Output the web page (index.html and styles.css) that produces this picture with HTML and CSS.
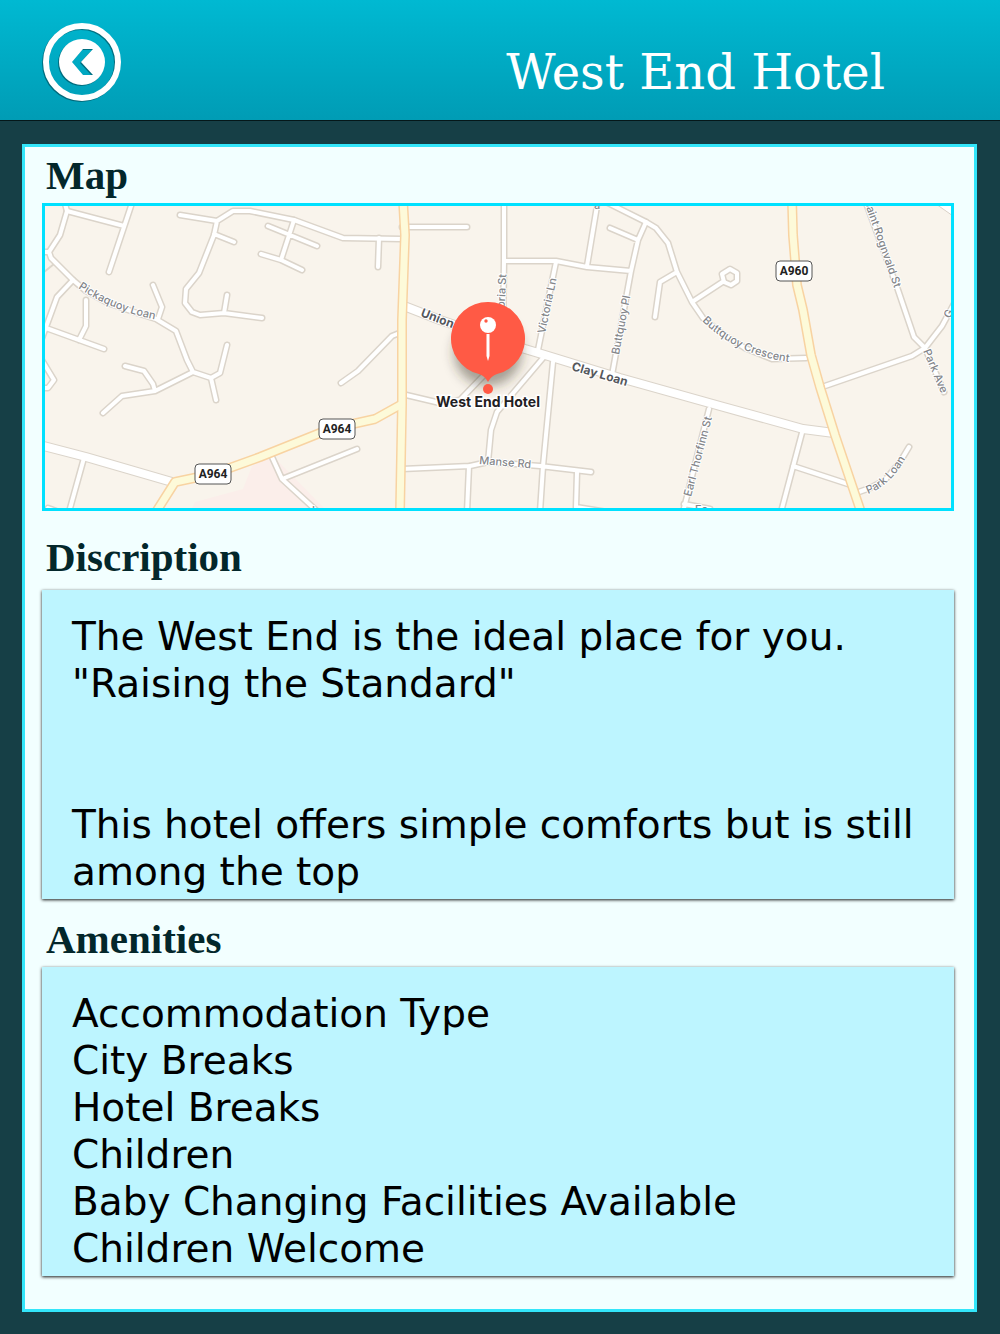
FILE: index.html
```html
<!DOCTYPE html>
<html lang="en">
<head>
<meta charset="utf-8">
<meta name="viewport" content="width=device-width, initial-scale=1">
<title>West End Hotel</title>
<link rel="stylesheet" href="styles.css">
</head>
<body>
<header class="topbar">
  <button class="back" type="button" aria-label="Back">
    <svg viewBox="0 0 80 80" aria-hidden="true">
      <circle class="ring" cx="40" cy="40" r="36"/>
      <path class="disc" fill-rule="evenodd" d="M40 17a23 23 0 1 1 0 46a23 23 0 1 1 0-46zM30 40L41 27H51L39 40L51 53H41z"/>
    </svg>
  </button>
  <h1 class="title">West End Hotel</h1>
</header>

<main class="panel">
  <section class="section section-map">
    <h2 class="heading">Map</h2>
    <div class="map">
      <svg class="map-art" viewBox="45 206 906 302" preserveAspectRatio="xMidYMid slice" role="img" aria-label="Map around the West End Hotel">
        <defs>
          <g id="lanes">
            <path d="M64 200L67 211L60 235L49 252H40M49 252L51 258L73 280L86 291L108 303L134 312L156 319L176 331L187 360L193 372L211 378L220 373L227 345M211 378L216 400M193 372L155 391L122 396L103 413M155 391L153 384L144 371L125 366"/>
            <path d="M67 211L124 226M133 200L109 272M73 280L57 297L42 338M46 328L104 349M86 300V326L79 340M40 357L54 380L48 388H40M153 285L162 307L158 319"/>
            <path d="M180 215L217 221L233 211H250L294 220L343 238L402 239M217 221L214 235L199 273L186 289L185 303L192 312L200 315L224 313L262 318M214 234L234 242M224 313L227 295"/>
            <path d="M268 226L317 246M261 254L281 260L302 270M294 220L281 260M379 238L378 267M402 227H467M402 332L392 336L358 371L341 383"/>
            <path d="M84 458L69 512M48 508L64 514M272 457L282 479L318 512M282 479L357 449"/>
            <path d="M402 394L440 403L460 400L486 373M402 469L470 466L488 462L540 466L591 472M469 466L467 512M543 358L497 412L491 430L488 462M553 362L543 466L540 512"/>
            <path d="M504 200V261L503 330M504 261H556L587 267L631 271M598 200L587 266M556 262L538 350M646 222L638 240L631 271L612 375M610 228L638 240M577 472L576 507L607 512"/>
            <path d="M602 200L646 222L656 228L668 243L677 272L692 302L703 318L724 335L745 348L772 359L806 358M677 272L660 282L655 317M692 302L724 281M730 269L737 273L737 281L731 285L724 282L722 274Z"/>
            <path d="M709 409L683 512M684 504L710 509M803 429L781 512M793 466L848 484M856 493L870 488L885 480L900 462L909 447M822 387L912 356L925 348L942 326L956 300M865 200L898 290L914 337L925 348L944 392"/>
          </g>
          <g id="streets">
            <path d="M40 445L86 457L172 482"/>
            <path d="M404 306L440 320L525 349L545 355L620 378L720 406L803 429L834 433"/>
          </g>
          <g id="mains">
            <path d="M403 200L405 235L402 320L402 404L400 512"/>
            <path d="M402 404L375 419L330 429L260 457L213 474L175 482L156 512"/>
            <path d="M792 200L793 235L797 285L803 310L811 355L820 387L835 435L861 512"/>
          </g>
          <path id="p-pick" d="M78 288Q112 311 157 320"/>
          <path id="p-union" d="M420 316L470 335"/>
          <path id="p-clay" d="M571 370L640 390"/>
          <path id="p-vic" d="M504 318L507 262"/>
          <path id="p-vln" d="M545 334L560 262"/>
          <path id="p-butt" d="M619 355L633 282"/>
          <path id="p-cres" d="M702 321Q741 359 800 363"/>
          <path id="p-rogn" d="M864 201L900 305"/>
          <path id="p-park" d="M923 351L946 405"/>
          <path id="p-loan" d="M868 494Q890 486 906 458"/>
          <path id="p-earl" d="M691 497L714 410"/>
          <path id="p-manse" d="M479 464L540 469"/>
          <path id="p-g" d="M950 319L962 295"/>
          <filter id="soft" x="-50%" y="-50%" width="200%" height="200%"><feGaussianBlur stdDeviation="6"/></filter>
        </defs>
        <rect class="land" x="40" y="200" width="920" height="320"/>
        <path class="pink" d="M190 512L195 502L243 489L252 466L272 455L328 512z"/>
        <path class="corner" d="M936 204L953 216V204z"/>
        <path class="track" d="M44 272L54 264"/>
        <use class="lane-edge" href="#lanes"/>
        <use class="street-edge" href="#streets"/>
        <use class="lane" href="#lanes"/>
        <use class="street" href="#streets"/>
        <use class="main-edge" href="#mains"/>
        <use class="main-road" href="#mains"/>

        <g class="label">
          <text><textPath href="#p-pick">Pickaquoy Loan</textPath></text>
          <text><textPath href="#p-vic">ctoria St</textPath></text>
          <text><textPath href="#p-vln">Victoria Ln</textPath></text>
          <text><textPath href="#p-butt">Buttquoy Pl</textPath></text>
          <text><textPath href="#p-cres">Buttquoy Crescent</textPath></text>
          <text><textPath href="#p-rogn">Saint Rognvald St</textPath></text>
          <text><textPath href="#p-park">Park Ave</textPath></text>
          <text><textPath href="#p-loan">Park Loan</textPath></text>
          <text><textPath href="#p-earl">Earl Thorfinn St</textPath></text>
          <text><textPath href="#p-manse">Manse Rd</textPath></text>
          <text><textPath href="#p-g">G</textPath></text>
          <text x="695" y="513">Ea</text>
          <text x="594" y="209">a</text>
          <text x="312" y="514">L</text>
        </g>
        <g class="label label-strong">
          <text><textPath href="#p-union">Union</textPath></text>
          <text><textPath href="#p-clay">Clay Loan</textPath></text>
        </g>

        <g class="sign">
          <rect x="319" y="419" width="36" height="20" rx="4"/><text x="337" y="433">A964</text>
          <rect x="195" y="464" width="36" height="20" rx="4"/><text x="213" y="478">A964</text>
          <rect x="776" y="261" width="36" height="20" rx="4"/><text x="794" y="275">A960</text>
        </g>

        <circle class="pin-shadow" cx="488" cy="352" r="34" filter="url(#soft)"/>
        <path class="pin" d="M488 302a36.500 36.500 0 0 1 9 72q-6 2-9 8q-3-6-9-8a36.500 36.500 0 0 1 9-72z"/>
        <circle class="pin" cx="488" cy="389" r="5"/>
        <path class="pin-glyph" d="M486.500 334h3v22l-1.500 5l-1.500-5z"/>
        <circle class="pin-glyph" cx="488" cy="325" r="8"/>
        <circle class="pin" cx="486" cy="321" r="1.700"/>
        <text class="place" x="488" y="407">West End Hotel</text>
      </svg>
    </div>
  </section>

  <section class="section section-text">
    <h2 class="heading">Discription</h2>
    <div class="card">
      <p>The West End is the ideal place for you.<br>"Raising the Standard"</p>
      <p class="after-break">This hotel offers simple comforts but is still among the top</p>
    </div>
  </section>

  <section class="section">
    <h2 class="heading">Amenities</h2>
    <ul class="card">
      <li>Accommodation Type</li>
      <li>City Breaks</li>
      <li>Hotel Breaks</li>
      <li>Children</li>
      <li>Baby Changing Facilities Available</li>
      <li>Children Welcome</li>
    </ul>
  </section>
</main>
</body>
</html>
```
FILE: styles.css
```css
* { box-sizing: border-box; }

body {
  margin: 0;
  background: #163f46;
  color: #000;
  font-family: "DejaVu Sans", Verdana, sans-serif;
}

h1, h2, p, ul { margin: 0; padding: 0; }

.topbar {
  display: flex;
  align-items: center;
  justify-content: space-between;
  height: 121px;
  padding: 4px 115px 0 42px;
  border-bottom: 1px solid #041719;
  background: linear-gradient(#00b9d2, #009cb5);
}

.back {
  width: 80px;
  height: 80px;
  padding: 0;
  border: 0;
  background: none;
  cursor: pointer;
}

.back svg {
  display: block;
  width: 80px;
  height: 80px;
  filter: drop-shadow(-1px 1px 0 rgba(0, 50, 60, .5));
}

.ring { fill: none; stroke: #fff; stroke-width: 6; }
.disc { fill: #fff; }

.title {
  padding-top: 20px;
  color: #fff;
  font: 400 48px/56px "DejaVu Serif", serif;
}

.panel {
  margin: 23px 23px 22px 22px;
  padding: 0 20px 33px 17px;
  border: 3px solid #33e6fa;
  background: #f2ffff;
}

.section-map { margin-bottom: 18px; }
.section-text { margin-bottom: 12px; }
.section-text .card { margin-top: 5px; }

.heading {
  padding-left: 4px;
  color: #03272b;
  font: 700 41px/56px "Liberation Serif", serif;
}

.map {
  border: 3px solid #00e1ff;
}

.map-art { display: block; width: 100%; height: auto; }

.card {
  padding: 23px 30px 4px;
  background: #bdf5ff;
  box-shadow: 0 1px 3px rgba(0, 0, 0, .9);
  font-size: 39px;
  line-height: 47px;
  list-style: none;
}

.after-break { margin-top: 94px; }

.land { fill: #f9f4ec; }
.pink { fill: #fbeeea; }
.corner { fill: #fff; stroke: #d9d1c7; }
.track { stroke: #ddd6cc; stroke-width: 2; }

.lane-edge, .lane, .street-edge, .street, .main-edge, .main-road {
  fill: none;
  stroke-linejoin: round;
}

.lane-edge, .lane { stroke-linecap: round; }
.lane-edge { stroke: #dbd4ca; stroke-width: 7; }
.lane { stroke: #fff; stroke-width: 4; }
.street-edge { stroke: #dbd4ca; stroke-width: 10; }
.street { stroke: #fff; stroke-width: 8; }
.main-edge { stroke: #f8d3a2; stroke-width: 10; }
.main-road { stroke: #fdfad9; stroke-width: 7; }

.label {
  fill: #84868a;
  stroke: #fff;
  stroke-width: 2;
  stroke-linejoin: round;
  paint-order: stroke;
  font: 500 11px Inter, sans-serif;
}

.label-strong { fill: #55585d; font-size: 12px; font-weight: 700; }

.sign rect { fill: #fff; stroke: #555; stroke-width: 1; }
.sign text { fill: #222; font: 700 12px Roboto, sans-serif; text-anchor: middle; }

.pin-shadow { fill: rgba(60, 50, 40, .45); }
.pin { fill: #ff5a45; }
.pin-glyph { fill: #fff; }

.place {
  fill: #1f2023;
  stroke: #fff;
  stroke-width: 3;
  paint-order: stroke;
  text-anchor: middle;
  font: 700 14px Inter, sans-serif;
}
```
